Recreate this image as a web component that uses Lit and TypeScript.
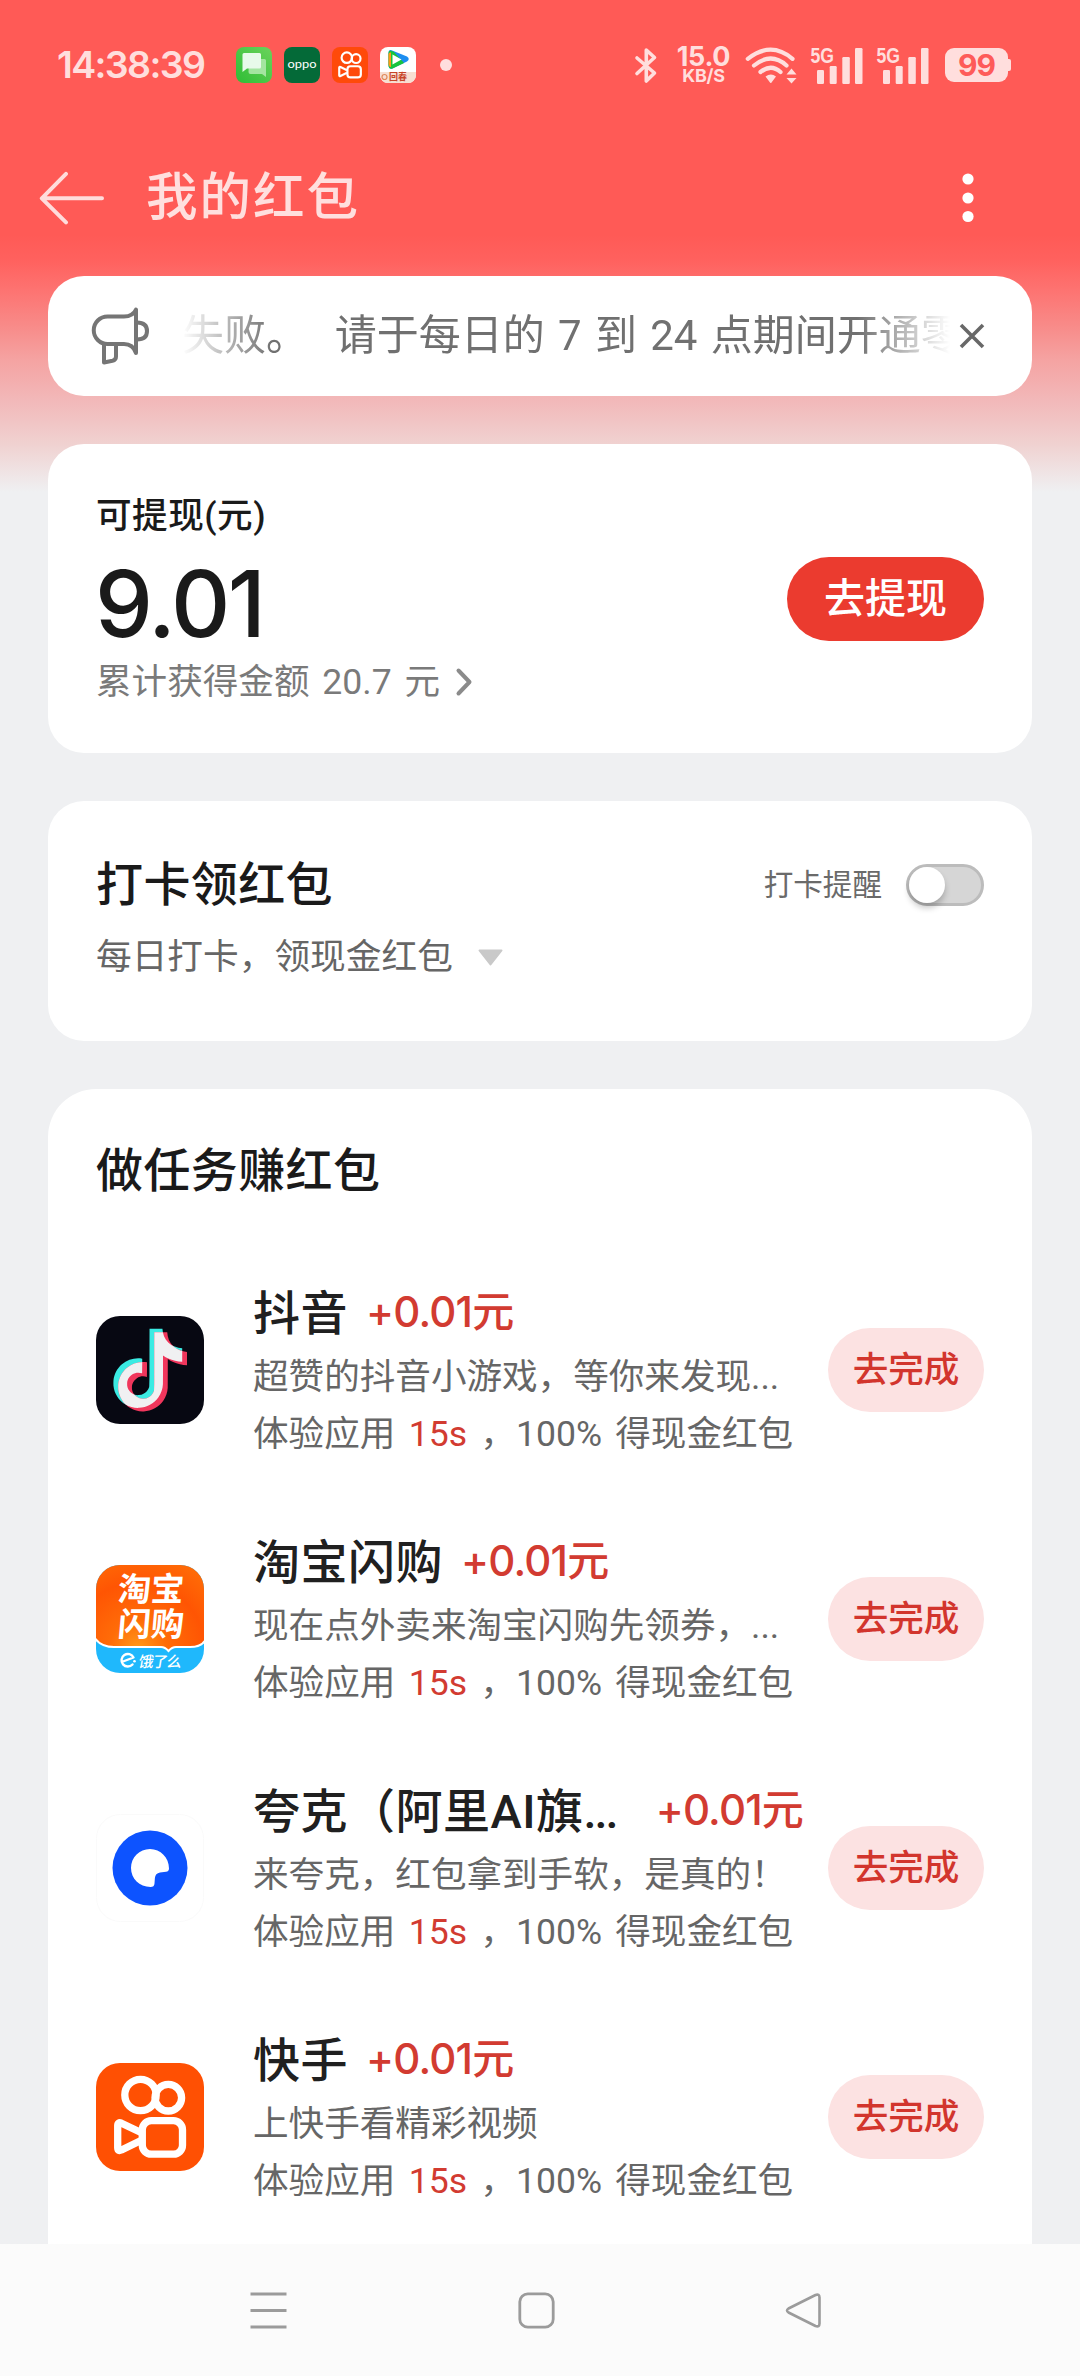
import { LitElement, html, css, svg, TemplateResult } from "lit";
import { customElement, property } from "lit/decorators.js";

interface Task {
  name: string;
  more?: boolean;
  desc: string;
  icon: TemplateResult;
}

const NOTE_PATH =
  "M12.525.02c1.31-.02 2.61-.01 3.91-.02.08 1.53.63 3.09 1.75 4.17 1.12 1.11 2.7 1.62 4.24 1.79v4.03c-1.44-.05-2.89-.35-4.2-.97-.57-.26-1.1-.59-1.62-.93-.01 2.92.01 5.84-.02 8.75-.08 1.4-.54 2.79-1.35 3.94-1.31 1.92-3.58 3.17-5.91 3.21-1.43.08-2.86-.31-4.08-1.03-2.02-1.19-3.44-3.37-3.65-5.71-.02-.5-.03-1-.01-1.49.18-1.9 1.12-3.72 2.58-4.96 1.66-1.44 3.98-2.13 6.15-1.72.02 1.48-.04 2.96-.04 4.44-.99-.32-2.15-.23-3.02.37-.63.41-1.11 1.04-1.36 1.75-.21.51-.15 1.07-.14 1.61.24 1.64 1.82 3.02 3.5 2.87 1.12-.01 2.19-.66 2.77-1.61.19-.33.4-.67.41-1.06.1-1.79.06-3.57.07-5.36.01-4.03-.01-8.05.02-12.07z";

const douyinIcon = html`<svg width="108" height="108" viewBox="0 0 108 108">
  <defs>
    <clipPath id="note-clip"><path d=${NOTE_PATH} transform="translate(12.2 12.7) scale(3.3)" /></clipPath>
  </defs>
  <rect width="108" height="108" rx="24" fill="#070812" />
  <path d=${NOTE_PATH} fill="#3bebe3" transform="translate(12.2 12.7) scale(3.3)" />
  <path d=${NOTE_PATH} fill="#f0365c" transform="translate(17 16.3) scale(3.3)" />
  <g clip-path="url(#note-clip)">
    <path d=${NOTE_PATH} fill="#f0f0f2" transform="translate(17 16.3) scale(3.3)" />
  </g>
</svg>`;

const taobaoIcon = html`<svg width="108" height="108" viewBox="0 0 108 108">
  <defs>
    <radialGradient id="tb-orange" gradientUnits="userSpaceOnUse" cx="42" cy="84" r="95">
      <stop offset="0" stop-color="#ff9a1a" />
      <stop offset=".3" stop-color="#ff6c08" />
      <stop offset=".7" stop-color="#ff5503" />
      <stop offset="1" stop-color="#ff6a06" />
    </radialGradient>
    <clipPath id="tb-clip"><rect width="108" height="108" rx="24" /></clipPath>
  </defs>
  <g clip-path="url(#tb-clip)">
    <rect width="108" height="108" fill="#1fb8fc" />
    <path d="M-3 -3H111V70Q109 82 94 82H80Q76 82 72.500 86Q69 82 65 82H18Q3 82 -3 70Z" fill="url(#tb-orange)" stroke="#fff" stroke-width="2" />
  </g>
  <g fill="#fff" font-family="'Noto Sans CJK SC', sans-serif" font-weight="700">
    <text x="0" y="0" font-size="33" textLength="66" transform="translate(21 36) skewX(-5)">淘宝</text>
    <text x="0" y="0" font-size="33" textLength="66" transform="translate(21 70.500) skewX(-5)">闪购</text>
    <text x="0" y="0" font-size="15" textLength="43" font-weight="500" transform="translate(42 101.500) skewX(-9)">饿了么</text>
  </g>
  <path d="M27 96.500L37.500 92.500A6.300 6.300 0 1 0 36.500 99.500" fill="none" stroke="#fff" stroke-width="2.400" stroke-linecap="round" stroke-linejoin="round" />
  <circle cx="38.500" cy="96.300" r="1.300" fill="#fff" />
</svg>`;

const quarkIcon = html`<svg width="108" height="108" viewBox="0 0 108 108">
  <rect x=".5" y=".5" width="107" height="107" rx="24" fill="#fff" stroke="#fafafa" />
  <circle cx="54" cy="54" r="37.500" fill="#0d53ff" />
  <path d="M54 35C64.500 35 73 43.500 73 54.500Q73 57.500 70 57.800L64 58.600Q59.300 59.500 58.900 64L58.500 69.500Q58.300 73 54.500 73C43.500 73 35 64.500 35 54C35 43.500 43.500 35 54 35Z" fill="#fff" />
</svg>`;

const kuaishouMark = (w: number) => svg`<g fill="none" stroke="#fff" stroke-width=${w} stroke-linejoin="round">
  <circle cx="44.500" cy="32" r="15.700" />
  <circle cx="72.300" cy="34.700" r="13.300" />
  <rect x="46.300" y="57.700" width="40.200" height="33.500" rx="9" />
  <path d="M45 69.500L25.500 60.200Q21.700 58.700 21.700 62.500V84.800Q21.700 88.600 25.500 87L45 77.500" />
</g>`;

const kuaishouIcon = html`<svg width="108" height="108" viewBox="0 0 108 108">
  <rect width="108" height="108" rx="24" fill="#ff5003" />
  ${kuaishouMark(7.3)}
</svg>`;

@customElement("status-bar")
export class StatusBar extends LitElement {
  static styles = css`
    :host { display: flex; align-items: center; height: 128px; padding: 2px 69px 0 57px; box-sizing: border-box; color: #ffdedd; font-family: Inter, Roboto, sans-serif; }
    svg { display: block; flex: none; overflow: visible; }
    .time { width: 179px; font-size: 37.500px; font-weight: 600; line-height: 44px; letter-spacing: -1.650px; white-space: nowrap; }
    .apps { display: flex; gap: 12px; }
    .dot { width: 12px; height: 12px; border-radius: 50%; background: #ffdedd; margin-left: 24px; }
    .right { margin-left: auto; display: flex; align-items: center; }
    .speed { width: 55px; margin: 0 14px 0 18px; text-align: center; white-space: nowrap; }
    .num { font-size: 27px; font-weight: 700; line-height: 22px; letter-spacing: -0.300px; }
    .unit { font-size: 18px; font-weight: 700; line-height: 16px; letter-spacing: -0.300px; }
    .signal { margin-left: 14px; }
    .battery { margin-left: 16px; }
  `;

  private signal() {
    return html`<svg class="signal" width="52" height="37" viewBox="0 0 52 37">
      <g fill="#ffdedd">
        <text x="-0.500" y="16" font-family="'Liberation Sans', sans-serif" font-weight="700" font-size="22.500" textLength="23.500" lengthAdjust="spacingAndGlyphs">5G</text>
        <rect x="6" y="23" width="7" height="14" rx="1.200" /><rect x="18.700" y="19" width="7" height="18" rx="1.200" />
        <rect x="31.300" y="10" width="7.500" height="27" rx="1.200" /><rect x="44" y="1" width="7.500" height="36" rx="1.200" />
      </g>
    </svg>`;
  }

  render() {
    return html`
      <div class="time">14:38:39</div>
      <div class="apps">
        <svg width="36" height="36" viewBox="0 0 36 36">
          <defs><linearGradient id="msg" x1="0" y1="1" x2="1" y2="0"><stop offset="0" stop-color="#2fbd35" /><stop offset="1" stop-color="#6bd35c" /></linearGradient></defs>
          <rect width="36" height="36" rx="8" fill="url(#msg)" />
          <path d="M13 12H28.500Q30 12 30 13.500V30L26 27H14.500Q12.500 27 12.500 25Z" fill="#a4e5a0" />
          <path d="M8 6H23.500Q25 6 25 7.500V20Q25 21.500 23.500 21.500H11L6.500 25V7.500Q6.500 6 8 6Z" fill="#e8faea" />
        </svg>
        <svg width="36" height="36" viewBox="0 0 36 36">
          <rect width="36" height="36" rx="8" fill="#046a38" />
          <text x="3.500" y="20.500" font-family="Lato, sans-serif" font-size="12" fill="#fff" textLength="29" lengthAdjust="spacingAndGlyphs">oppo</text>
        </svg>
        <svg width="36" height="36" viewBox="0 0 108 108">
          <rect width="108" height="108" rx="24" fill="#ff4a0a" />
          ${kuaishouMark(6.5)}
        </svg>
        <svg width="36" height="36" viewBox="0 0 36 36">
          <rect width="36" height="36" rx="8" fill="#fff" />
          <path d="M0 25H36V28A8 8 0 0 1 28 36H8A8 8 0 0 1 0 28Z" fill="#f7dfd2" />
          <path d="M11.500 3.200Q8.500 2.500 8.500 6V18Q8.500 22.500 12.500 21.500L27 14.500Q30.500 12 27 9.500Z" fill="#1c8df0" />
          <path d="M8.500 6V18Q8.500 22.500 12.500 21.500L24 16L14 5Q8.500 2 8.500 6Z" fill="#18c43c" />
          <path d="M8.500 7.500V17Q8.700 20 11 20V5.500Q8.500 5 8.500 7.500Z" fill="#ff9a16" />
          <path d="M12.500 7.500L21.500 12.500L12.500 17.500Z" fill="#fff" />
          <text x="9" y="33" font-family="'Noto Sans CJK SC', sans-serif" font-weight="700" font-size="9" fill="#c84428">回春</text>
          <circle cx="4.500" cy="30" r="2.500" fill="none" stroke="#e08a5c" stroke-width="1.200" />
        </svg>
      </div>
      <div class="dot"></div>
      <div class="right">
        <svg width="23" height="37" viewBox="0 0 23 37"><path d="M2 11L19.500 26L11.300 34V3L19.500 10.500L2 26.500" fill="none" stroke="#ffdedd" stroke-width="3.600" stroke-linejoin="round" stroke-linecap="round" /></svg>
        <div class="speed"><div class="num">15.0</div><div class="unit">KB/S</div></div>
        <svg width="52" height="37" viewBox="0 0 52 37">
          <g fill="none" stroke="#ffdedd" stroke-width="4.200" stroke-linecap="round">
            <path d="M2.800 11.800Q26 -6.500 47.500 11.800" /><path d="M9 18.500Q26 4.500 41.500 18.500" /><path d="M15.500 25Q26 16.500 35.500 25" />
          </g>
          <path d="M20.500 29.500Q26 25.500 31 29.500L26.500 35.500Q26 36.500 25 35.500Z" fill="#ffdedd" />
          <path d="M41.500 27.500L46.500 21.500L51.500 27.500ZM41.500 31L46.500 36.500L51.500 31Z" fill="#ffdedd" />
        </svg>
        ${this.signal()}
        ${this.signal()}
        <svg class="battery" width="66" height="34" viewBox="0 0 66 34">
          <rect width="63" height="34" rx="9" fill="#ffdedd" /><path d="M62.500 11H64Q66 11 66 13V21Q66 23 64 23H62.500Z" fill="#ffdedd" />
          <text x="13" y="27.800" font-family="Inter, sans-serif" font-weight="700" font-size="30" fill="#fe5b59" textLength="38">99</text>
        </svg>
      </div>`;
  }
}

@customElement("task-row")
export class TaskRow extends LitElement {
  @property({ attribute: false }) task!: Task;

  static styles = css`
    :host { display: flex; align-items: center; height: 249px; }
    svg { display: block; }
    .icon { flex: none; width: 108px; height: 108px; }
    .body { flex: 1; min-width: 0; margin: 4px 20px 0 49px; }
    .head { display: flex; align-items: center; height: 69px; }
    .name { font-size: 47px; letter-spacing: 0.500px; font-weight: 500; color: #202020; line-height: 68px; white-space: nowrap; padding-bottom: 2px; }
    .more { letter-spacing: -2px; margin-right: 21px; }
    .reward { font-family: Inter, "Noto Sans CJK SC", sans-serif; font-size: 42px; letter-spacing: -0.800px; font-weight: 500; color: #d23b31; line-height: 68px; margin-left: 18px; padding-bottom: 5px; white-space: nowrap; }
    .line { font-size: 35.600px; line-height: 57px; color: #666; white-space: nowrap; font-weight: 400; }
    .spaced { word-spacing: 4.500px; }
    .sec { color: #d23b31; }
    .go { flex: none; width: 156px; height: 84px; border: 0; padding: 0; border-radius: 42px; background: #fce2e2; color: #d2352d; font: 500 35.600px/84px Roboto, "Noto Sans CJK SC", sans-serif; text-align: center; }
  `;

  render() {
    const t = this.task;
    return html`
      <div class="icon">${t.icon}</div>
      <div class="body">
        <div class="head"><span class="name">${t.name}${t.more ? html`<span class="more">...</span>` : ""}</span><span class="reward">+0.01元</span></div>
        <div class="line">${t.desc}</div>
        <div class="line spaced">体验应用 <span class="sec">15s</span> ，100% 得现金红包</div>
      </div>
      <button class="go">去完成</button>`;
  }
}

@customElement("app-root")
export class AppRoot extends LitElement {
  private tasks: Task[] = [
    { name: "抖音", desc: "超赞的抖音小游戏，等你来发现...", icon: douyinIcon },
    { name: "淘宝闪购", desc: "现在点外卖来淘宝闪购先领券，...", icon: taobaoIcon },
    { name: "夸克（阿里AI旗", more: true, desc: "来夸克，红包拿到手软，是真的！", icon: quarkIcon },
    { name: "快手", desc: "上快手看精彩视频", icon: kuaishouIcon },
  ];

  static styles = css`
    :host { display: flex; flex-direction: column; width: 1080px; height: 2376px; overflow: hidden; font-family: Roboto, "Noto Sans CJK SC", sans-serif; color: #1a1a1a;
      background: linear-gradient(#ff5a56 0, #ff5a56 235px, #ff615e 260px, #fd7371 290px, #f88a88 325px, #f5a3a2 360px, #f2b8b9 400px, #f0d2d1 445px, #eff0f2 492px); }
    svg { display: block; flex: none; }
    .appbar { display: flex; align-items: center; height: 140px; padding: 0 106px 0 39px; flex: none; }
    .appbar h1 { flex: 1; margin: 0 0 0 41px; font-size: 51.500px; letter-spacing: 2px; font-weight: 500; color: #ffdfde; line-height: 70px; }
    .scroll { flex: 1; min-height: 0; overflow: hidden; padding: 8px 48px 0; display: flex; flex-direction: column; gap: 48px; }
    .card { background: #fff; border-radius: 36px; padding: 0 48px; flex: none; box-sizing: border-box; }
    .notice { height: 120px; padding: 0 46px 0 43px; display: flex; align-items: center; }
    .marquee { width: 768px; margin-left: 31px; overflow: hidden; white-space: pre; font-size: 42px; line-height: 60px; word-spacing: 2.900px; color: #707070; font-weight: 400; -webkit-mask-image: linear-gradient(90deg, transparent, #000 90px, #000 675px, transparent); mask-image: linear-gradient(90deg, transparent, #000 90px, #000 675px, transparent); }
    .close { margin-left: auto; }
    .balance { height: 309px; display: flex; align-items: center; justify-content: space-between; }
    .label { font-size: 35.600px; letter-spacing: 0.500px; line-height: 50px; padding-top: 1px; font-weight: 500; }
    .amount { font-family: Inter, Roboto, sans-serif; font-size: 92px; font-weight: 500; line-height: 106px; letter-spacing: -2.500px; margin: 10px 0 0 -1px; }
    .total { display: flex; align-items: center; gap: 15px; font-size: 35.600px; line-height: 50px; color: #7a7a7a; font-weight: 400; word-spacing: 4px; }
    .cash { width: 197px; height: 84px; border: 0; padding: 0; border-radius: 42px; background: #eb3b2f; color: #fff; font: 500 41px/84px Roboto, "Noto Sans CJK SC", sans-serif; }
    .checkin { height: 240px; padding-top: 49px; }
    .row { display: flex; align-items: center; }
    h2 { margin: 0; font-size: 47px; line-height: 70px; font-weight: 500; letter-spacing: 0.400px; flex: 1; }
    .remind { font-size: 29.600px; color: #6a6a6a; font-weight: 400; padding-bottom: 5px; }
    .toggle { width: 78px; height: 42px; box-sizing: border-box; border: 3px solid #bcbcbc; border-radius: 21px; background: #d6d6d6; margin-left: 24px; }
    .thumb { width: 36px; height: 36px; border-radius: 50%; background: #fff; box-shadow: 0 5px 6px rgba(0, 0, 0, 0.220); }
    .sub { gap: 25px; font-size: 35.700px; line-height: 50px; color: #666; font-weight: 400; margin-top: 12px; }
    .tasks { flex: 1 0 auto; border-radius: 48px 48px 0 0; padding-top: 47px; }
    .list { margin-top: 39px; }
    .nav { flex: none; height: 132px; background: #fbfbfb; display: flex; align-items: center; justify-content: space-between; padding: 0 258px 0 250px; box-sizing: border-box; }
  `;

  render() {
    return html`
      <status-bar></status-bar>
      <header class="appbar">
        <svg width="66" height="54" viewBox="0 0 66 54"><path d="M27 3.500L2.800 28L27 52M3 28H63" transform="translate(0 -.7)" fill="none" stroke="#ffdcdb" stroke-width="4" stroke-linecap="round" stroke-linejoin="round" /></svg>
        <h1>我的红包</h1>
        <svg width="12" height="50" viewBox="0 0 12 50"><g fill="#fff"><circle cx="6" cy="6" r="5.600" /><circle cx="6" cy="25" r="5.600" /><circle cx="6" cy="43.500" r="5.600" /></g></svg>
      </header>
      <main class="scroll">
        <section class="card notice">
          <svg width="60" height="60" viewBox="0 0 60 60" fill="none" stroke="#757575" stroke-width="4" stroke-linejoin="round">
            <path d="M16.500 10.500H33Q42 10.500 45 3.500V47Q42 38 33 38H16.500A13.700 13.700 0 0 1 16.500 10.500Z" />
            <path d="M46 16.500Q56 16.500 56 25Q56 33.500 46 33.500" />
            <path d="M13 38V56.500L21.500 54.800Q25 54 25 50.500V38" />
          </svg>
          <div class="marquee">失败。  请于每日的 7 到 24 点期间开通零</div>
          <svg class="close" width="28" height="28" viewBox="0 0 28 28"><path d="M3 3L25 25M25 3L3 25" stroke="#686868" stroke-width="3.600" /></svg>
        </section>
        <section class="card balance">
          <div>
            <div class="label">可提现(元)</div>
            <div class="amount">9.01</div>
            <div class="total">累计获得金额 20.7 元
              <svg width="18" height="30" viewBox="0 0 18 30"><path d="M3.500 3.500L14.500 15L3.500 26.500" fill="none" stroke="#8b8b8b" stroke-width="4" stroke-linecap="round" stroke-linejoin="round" /></svg>
            </div>
          </div>
          <button class="cash">去提现</button>
        </section>
        <section class="card checkin">
          <div class="row">
            <h2>打卡领红包</h2>
            <span class="remind">打卡提醒</span>
            <div class="toggle"><div class="thumb"></div></div>
          </div>
          <div class="row sub">每日打卡，领现金红包
            <svg width="25" height="17" viewBox="0 0 25 17"><path d="M1.500 1.500H23.500L12.500 15.500Z" fill="#c9c9c9" stroke="#c9c9c9" stroke-width="2" stroke-linejoin="round" /></svg>
          </div>
        </section>
        <section class="card tasks">
          <h2>做任务赚红包</h2>
          <div class="list">${this.tasks.map((t) => html`<task-row .task=${t}></task-row>`)}</div>
        </section>
      </main>
      <nav class="nav">
        <svg width="37" height="37" viewBox="0 0 37 37"><path d="M.5 2H36.500M.5 18.500H36.500M.5 35H36.500" stroke="#9b9b9b" stroke-width="3" /></svg>
        <svg width="37" height="37" viewBox="0 0 37 37"><rect x="1.800" y="1.800" width="33.400" height="33.400" rx="8" fill="none" stroke="#9b9b9b" stroke-width="2.800" /></svg>
        <svg width="37" height="37" viewBox="0 0 37 37"><path d="M30.500 3L3.500 16.500Q.5 18.500 3.500 20.500L30.500 34Q34.500 35.500 34.500 31.500V5.500Q34.500 1.500 30.500 3Z" fill="none" stroke="#9b9b9b" stroke-width="2.600" stroke-linejoin="round" /></svg>
      </nav>`;
  }
}
